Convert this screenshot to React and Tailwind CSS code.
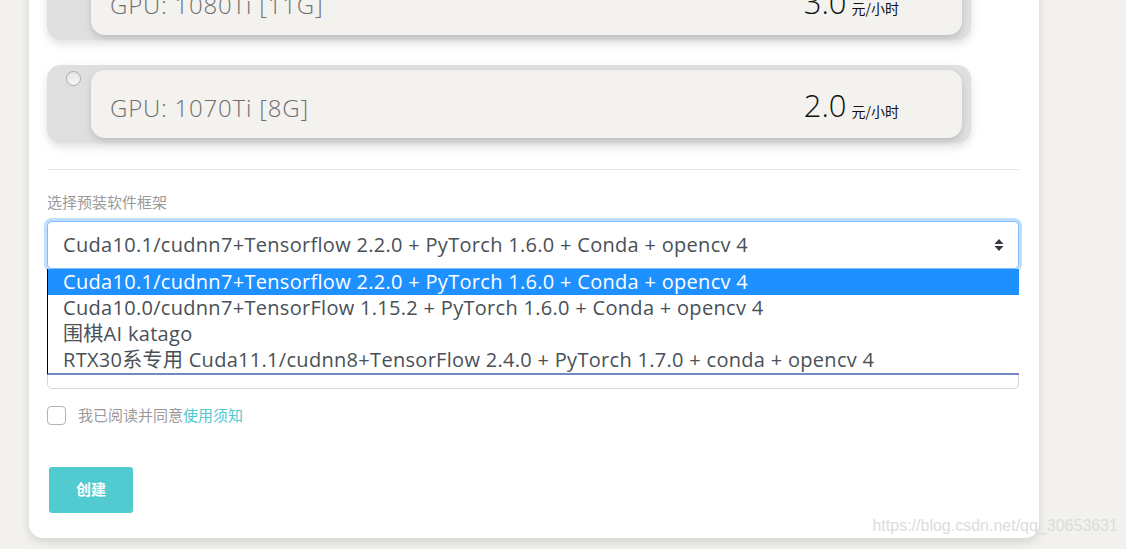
import React from 'react';

const options = [
    'Cuda10.1/cudnn7+Tensorflow 2.2.0 + PyTorch 1.6.0 + Conda + opencv 4',
    'Cuda10.0/cudnn7+TensorFlow 1.15.2 + PyTorch 1.6.0 + Conda + opencv 4',
    '围棋AI katago',
    'RTX30系专用 Cuda11.1/cudnn8+TensorFlow 2.4.0 + PyTorch 1.7.0 + conda + opencv 4',
];

function GpuCard({ name, mem, price }) {
    return (
        <div className="relative w-[924px] h-[78px] bg-[#e0dfdf] rounded-[14px] shadow-[0_4px_8px_rgba(0,0,0,0.12)] py-[5px] pl-[44px] pr-[9px]">
            {/* radio */}
            <div className="absolute left-[19px] top-[6px] w-[15px] h-[15px] rounded-full border border-[#a9a9a9] bg-gradient-to-b from-[#e6e6e6] to-[#f7f7f7]" />
            <div className="h-full bg-[#f3f2ef] rounded-[14px] shadow-[0_3px_6px_rgba(0,0,0,0.15)] flex items-end justify-between pl-[19px] pr-[63px] pb-[16px]">
                <span className="font-['Open_Sans',sans-serif] font-light text-[24px] leading-[28px] text-[#6f6f6f] tracking-[0.8px]">
                    GPU: {name} [{mem}]
                </span>
                <span className="flex items-end gap-[5px]">
                    <span className="font-['Open_Sans',sans-serif] font-light text-[31px] leading-[34px] text-[#111]">{price}</span>
                    <span className="font-['Noto_Sans_CJK_SC',sans-serif] text-[14px] leading-[22px] text-[#111]">元/小时</span>
                </span>
            </div>
        </div>
    );
}

export default function App() {
    return (
        <div className="relative h-[549px] bg-[#f2f1ee] overflow-hidden font-['Open_Sans','Noto_Sans_CJK_SC',sans-serif]">
            <div className="relative ml-[29px] w-[1010px] -mt-[38px] bg-white rounded-b-[14px] shadow-[0_4px_10px_rgba(0,0,0,0.12)] pl-[18px] pr-[20px] pb-[25px]">
                <div className="flex flex-col gap-[25px]">
                    <GpuCard name="1080Ti" mem="11G" price="3.0" />
                    <GpuCard name="1070Ti" mem="8G" price="2.0" />
                </div>

                <div className="mt-[26px] border-t border-[#e6e6e6]" />

                {/* framework select */}
                <div className="relative mt-[21px]">
                    <label className="block font-['Noto_Sans_CJK_SC',sans-serif] text-[15px] leading-[22px] text-[#9a9a9a] mb-[8px]">
                        选择预装软件框架
                    </label>
                    <div className="relative h-[48px] rounded-[5px] border border-[#80bdff] shadow-[0_0_0_3px_rgba(0,123,255,0.25)] bg-white flex items-center pl-[15px] pr-[14px]">
                        <span className="flex-1 text-[20px] tracking-[0.3px] text-[#495057] whitespace-nowrap">{options[0]}</span>
                        <svg width="10" height="14" viewBox="0 0 10 14" className="text-[#343a40]">
                            <path d="M5 1 L9.5 6 H0.5 Z M5 13 L9.5 8 H0.5 Z" fill="currentColor" />
                        </svg>
                    </div>

                    {/* open dropdown list */}
                    <div className="absolute left-0 right-0 top-[78px] z-10 bg-white border-l border-black border-b-2 border-b-[#7389c0]">
                        {options.map((o, i) => (
                            <div
                                key={o}
                                className={`h-[26px] pl-[15px] text-[20px] leading-[26px] tracking-[0.3px] whitespace-nowrap ${i === 0 ? 'bg-[#1e90ff] text-white' : 'text-[#495057]'}`}
                            >
                                {o}
                            </div>
                        ))}
                    </div>
                </div>

                {/* form group hidden beneath the open list */}
                <div className="mt-[44px]">
                    <label className="block text-[14px] leading-[22px] text-[#9a9a9a] mb-[8px]">&nbsp;</label>
                    <div className="h-[46px] rounded-[5px] border border-[#d6d6d6] bg-white" />
                </div>

                <label className="mt-[15px] flex items-center gap-[12px]">
                    <span className="w-[19px] h-[19px] rounded-[4px] border border-[#adb5bd] bg-white" />
                    <span className="font-['Noto_Sans_CJK_SC',sans-serif] text-[15px] text-[#9a9a9a]">
                        我已阅读并同意<span className="text-[#4fc8d1]">使用须知</span>
                    </span>
                </label>

                <button className="mt-[40px] ml-[2px] w-[84px] h-[46px] rounded-[3px] bg-[#52cbd0] text-white font-['Noto_Sans_CJK_SC',sans-serif] font-bold text-[15px]">
                    创建
                </button>
            </div>

            <div className="absolute right-[8px] bottom-[11px] font-['Liberation_Sans',sans-serif] text-[16px] text-[#dcdcdc]">
                https://blog.csdn.net/qq_30653631
            </div>
        </div>
    );
}
